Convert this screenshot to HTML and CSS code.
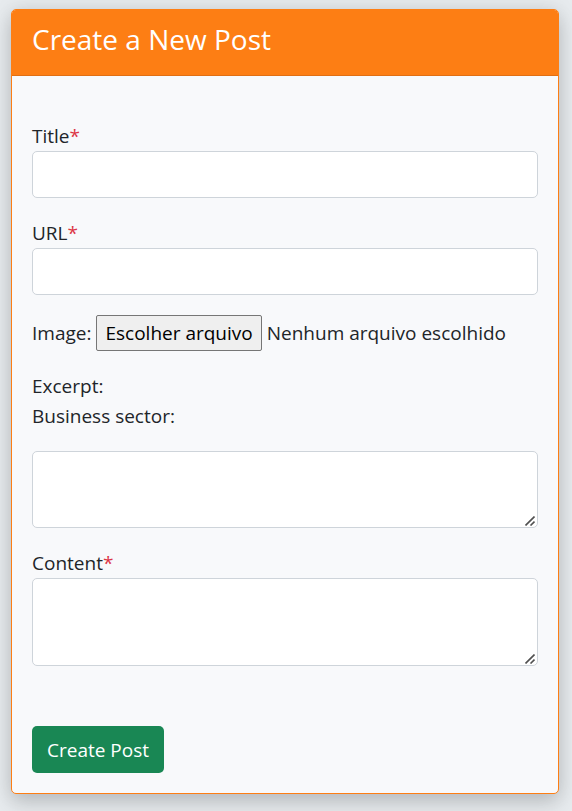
FILE: index.html
```html
<!DOCTYPE html>
<html lang="en">
<head>
<meta charset="utf-8">
<meta name="viewport" content="width=device-width, initial-scale=1">
<title>Create a New Post</title>
<link rel="stylesheet" href="styles.css">
</head>
<body>
<main class="card">
  <header class="card-header">
    <h1 class="card-title">Create a New Post</h1>
  </header>
  <form class="card-body">
    <div class="field">
      <label for="title">Title<span class="required">*</span></label>
      <input class="control" type="text" id="title" name="title" required>
    </div>
    <div class="field">
      <label for="url">URL<span class="required">*</span></label>
      <input class="control" type="text" id="url" name="url" required>
    </div>
    <div class="file-row">
      <label for="image">Image:</label>
      <label class="file-button" for="image">Escolher arquivo</label>
      <span class="file-name">Nenhum arquivo escolhido</span>
      <input class="file-input" type="file" id="image" name="image">
    </div>
    <div class="excerpt">
      <label for="excerpt">Excerpt:</label>
      <label for="excerpt">Business sector:</label>
      <div class="area area-short">
        <textarea class="control" id="excerpt" name="excerpt"></textarea>
        <svg class="grip" viewBox="0 0 10 10" aria-hidden="true"><path d="M0.5 9.5L9.5 0.5M5.5 9.5L9.5 5.5"/></svg>
      </div>
    </div>
    <div class="field">
      <label for="content">Content<span class="required">*</span></label>
      <div class="area">
        <textarea class="control" id="content" name="content" required></textarea>
        <svg class="grip" viewBox="0 0 10 10" aria-hidden="true"><path d="M0.5 9.5L9.5 0.5M5.5 9.5L9.5 5.5"/></svg>
      </div>
    </div>
    <button class="submit" type="submit">Create Post</button>
  </form>
</main>
</body>
</html>
```
FILE: styles.css
```css
* {
  box-sizing: border-box;
}

body {
  margin: 0;
  padding: 9px 13px 17px 11px;
  background: #e7ebee;
  color: #212529;
  font-family: "Segoe UI", "Open Sans", "Noto Sans", sans-serif;
  font-size: 19px;
  line-height: 30px;
}

.card {
  border: 1px solid #fd7e14;
  border-radius: 5px;
  background: #f8f9fb;
  box-shadow: 0 10px 20px rgba(0, 0, 0, 0.15), 0 0 20px rgba(0, 0, 0, 0.1);
}

.card-header {
  padding: 9px 20px 16px;
  border-bottom: 1px solid #e06f14;
  border-radius: 4px 4px 0 0;
  background: #fd7e14;
  color: #fff;
}

.card-title {
  margin: 0;
  font-size: 28px;
  font-weight: 400;
  line-height: 40px;
}

.card-body {
  display: flex;
  flex-direction: column;
  gap: 20px;
  padding: 45px 20px 20px;
}

.field,
.excerpt {
  display: flex;
  flex-direction: column;
}

.required {
  color: #dc3545;
}

.control {
  display: block;
  width: 100%;
  height: 47px;
  margin: 0;
  padding: 8px 15px;
  border: 1px solid #ced4da;
  border-radius: 5px;
  background: #fff;
  color: inherit;
  font: inherit;
}

.area {
  position: relative;
}

.area .control {
  height: 88px;
  resize: vertical;
}

.area-short {
  margin-top: 20px;
}

.area-short .control {
  height: 77px;
}

.control::-webkit-resizer {
  background: transparent;
}

.grip {
  position: absolute;
  right: 3px;
  bottom: 2px;
  width: 10px;
  height: 10px;
  fill: none;
  stroke: #505050;
  stroke-width: 1.6;
  pointer-events: none;
}

.file-row {
  position: relative;
  display: flex;
  align-items: center;
  gap: 5px;
  white-space: nowrap;
}

.file-button {
  padding: 2px 8px;
  border: 1px solid #767676;
  border-radius: 2px;
  background: #efefef;
  color: #000;
}

.file-input {
  position: absolute;
  width: 1px;
  height: 1px;
  opacity: 0;
}

.submit {
  align-self: flex-start;
  height: 47px;
  margin-top: 40px;
  padding: 0 15px;
  border: 0;
  border-radius: 5px;
  background: #198754;
  color: #fff;
  font: inherit;
}
```
